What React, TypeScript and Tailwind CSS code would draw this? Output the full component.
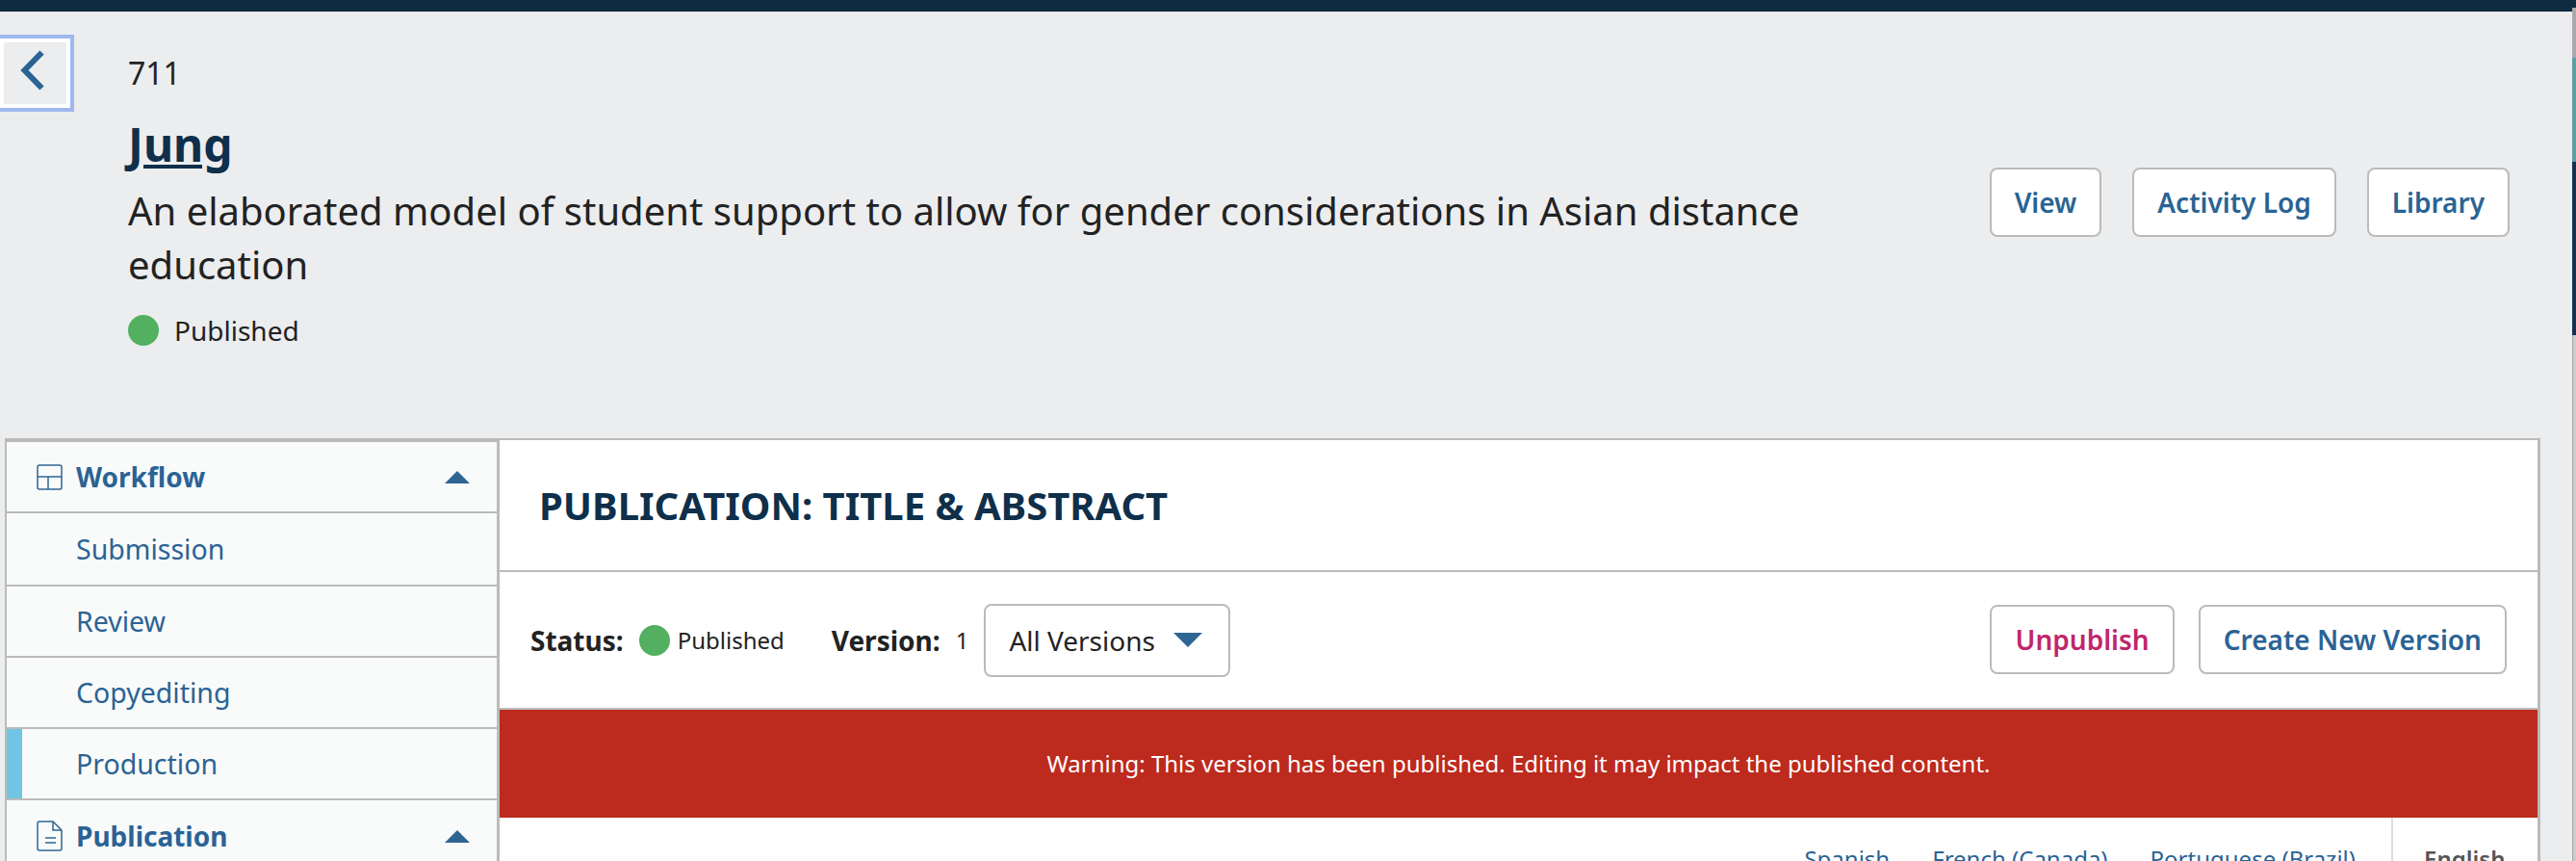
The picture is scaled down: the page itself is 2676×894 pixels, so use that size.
const font = { fontFamily: '"Noto Sans", sans-serif' }

const steps = ['Submission', 'Review', 'Copyediting', 'Production']

const LayoutIcon = () => (
  <svg width="27" height="27" viewBox="0 0 27 27" fill="none" stroke="#2f6593" strokeWidth="1.5">
    <rect x="1" y="1" width="25" height="25" rx="2" />
    <path d="M1 13h25M12 13v13" />
  </svg>
)

const FileIcon = () => (
  <svg width="27" height="32" viewBox="0 0 27 32" fill="none" stroke="#2f6593" strokeWidth="1.5">
    <path d="M3 1h14l9 9v19a2 2 0 0 1-2 2H3a2 2 0 0 1-2-2V3a2 2 0 0 1 2-2z" />
    <path d="M17 1v9h9M9 18h11M9 23h11" />
  </svg>
)

const Caret = () => <div className="w-0 h-0 border-x-[13px] border-x-transparent border-b-[13px] border-b-[#2f6593]" />

function HeaderButton({ label }: { label: string }) {
  return (
    <button className="h-[72px] px-[24px] bg-white border-2 border-[#bbbbbb] rounded-[8px] text-[28px] font-semibold text-[#2a6394]">
      {label}
    </button>
  )
}

export default function App() {
  return (
    <div style={font} className="relative h-[894px] w-[2676px] overflow-hidden bg-[#ecedef] text-[#222222]">
      {/* Top bar */}
      <div className="h-3 bg-[#0f2b40] mr-1" />

      {/* Page title */}
      <div className="relative h-[443px] pl-[133px] pr-[69px] flex items-center justify-between">
        <button className="absolute -left-1 top-6 w-[81px] h-[80px] border-4 border-[#9fb8ee]">
          <div className="h-full border-4 border-white flex items-center justify-center">
            <svg className="mr-[5px] mb-[6px]" width="26" height="42" viewBox="0 0 26 42" fill="none" stroke="#2a6394" strokeWidth="6">
              <path d="M22.500 2.500 4.500 21l18 18.500" />
            </svg>
          </div>
        </button>
        <div className="w-[1880px] self-start pt-[42px]">
          <div className="text-[32px] leading-[44px]">711</div>
          <h1 className="mt-[20px] text-[48px] leading-[64px] font-bold text-[#0f2f4a] underline">Jung</h1>
          <p className="mt-[9px] text-[40px] leading-[56px]">
            An elaborated model of student support to allow for gender considerations in Asian distance education
          </p>
          <div className="mt-[19px] flex items-center gap-4">
            <span className="w-8 h-8 rounded-full bg-[#53b060]" />
            <span className="text-[28px]">Published</span>
          </div>
        </div>
        <div className="flex gap-8 mb-[48px]">
          <HeaderButton label="View" />
          <HeaderButton label="Activity Log" />
          <HeaderButton label="Library" />
        </div>
      </div>

      <div className="flex pl-[5px] pr-[37px]">
        {/* Side nav */}
        <div className="w-[514px] shrink-0 bg-[#f9fbfb] border-t-4 border-r-[3px] border-l-2 border-[#bbbbbb]">
          <div className="h-[74px] border-b-2 border-[#bbbbbb] pl-[31px] pr-[28px] flex items-center text-[28px] font-bold text-[#2a6394]">
            <LayoutIcon />
            <span className="ml-[14px] flex-1">Workflow</span>
            <Caret />
          </div>
          {steps.map((step, i) => (
            <div
              key={step}
              className={`relative ${i === 0 ? 'h-[76px]' : 'h-[74px]'} border-b-2 border-[#bbbbbb] pl-[72px] flex items-center text-[28.500px] text-[#2a6394] ${
                step === 'Production' ? 'before:absolute before:left-0 before:top-0 before:bottom-0 before:w-4 before:bg-[#6fc5e3]' : ''
              }`}
            >
              {step}
            </div>
          ))}
          <div className="h-[74px] pl-[31px] pr-[28px] flex items-center text-[28px] font-bold text-[#2a6394]">
            <FileIcon />
            <span className="ml-[14px] flex-1">Publication</span>
            <Caret />
          </div>
        </div>

        {/* Publication panel */}
        <div className="flex-1 bg-white border-t-2 border-[#bbbbbb] relative">
          <div className="h-[137px] pl-[41px] flex items-center border-b-2 border-[#bbbbbb]">
            <h2 className="text-[40px] font-bold text-[#0f2f4a]">PUBLICATION: TITLE &amp; ABSTRACT</h2>
          </div>
          <div className="h-[143px] pl-[32px] pr-[32px] flex items-center border-b-2 border-[#bbbbbb]">
            <span className="text-[28px] font-bold">Status:</span>
            <span className="ml-[16px] w-8 h-8 rounded-full bg-[#53b060]" />
            <span className="ml-[8px] text-[24px]">Published</span>
            <span className="ml-[49px] text-[28px] font-bold">Version:</span>
            <span className="ml-[16px] text-[24px]">1</span>
            <button className="ml-[16px] w-[256px] h-[76px] border-2 border-[#bbbbbb] rounded-[8px] pl-[24px] flex items-center text-[28px]">
              All Versions
              <span className="ml-[19px] w-0 h-0 border-x-[15px] border-x-transparent border-t-[15px] border-t-[#2f6593]" />
            </button>
            <div className="ml-auto flex gap-[25px] mb-[2px]">
              <button className="h-[72px] px-[24px] border-2 border-[#bbbbbb] rounded-[8px] text-[28px] font-semibold text-[#c0266c]">Unpublish</button>
              <button className="h-[72px] px-[24px] border-2 border-[#bbbbbb] rounded-[8px] text-[28px] font-semibold text-[#2a6394]">Create New Version</button>
            </div>
          </div>
          <div className="h-[112px] bg-[#bd2a1e] text-white text-[24px] flex items-center justify-center">
            Warning: This version has been published. Editing it may impact the published content.
          </div>
          <div className="flex justify-end text-[24px] text-[#2a6394] h-[60px]">
            <div className="flex gap-[44px] pt-[25px] pr-[37px]">
              <span>Spanish</span>
              <span>French (Canada)</span>
              <span>Portuguese (Brazil)</span>
            </div>
            <div className="w-[152px] border-l-2 border-[#dddddd] pt-[25px] pl-[32px] font-semibold text-[#555555]">English</div>
          </div>
        </div>
        <div className="w-[3px] bg-[#bbbbbb]" />
      </div>

      {/* Sliver of the window behind, at the right edge */}
      <div className="absolute right-0 top-0 bottom-0 w-1 flex flex-col">
        <div className="h-2 bg-[#0f2b40]" />
        <div className="h-[52px] bg-[#a9a9ab]" />
        <div className="h-[108px] bg-[#5f9ea3]" />
        <div className="h-[180px] bg-[#14304f]" />
        <div className="flex-1 bg-[#cccccc] border-l border-[#a8a8a8]" />
      </div>
    </div>
  )
}
